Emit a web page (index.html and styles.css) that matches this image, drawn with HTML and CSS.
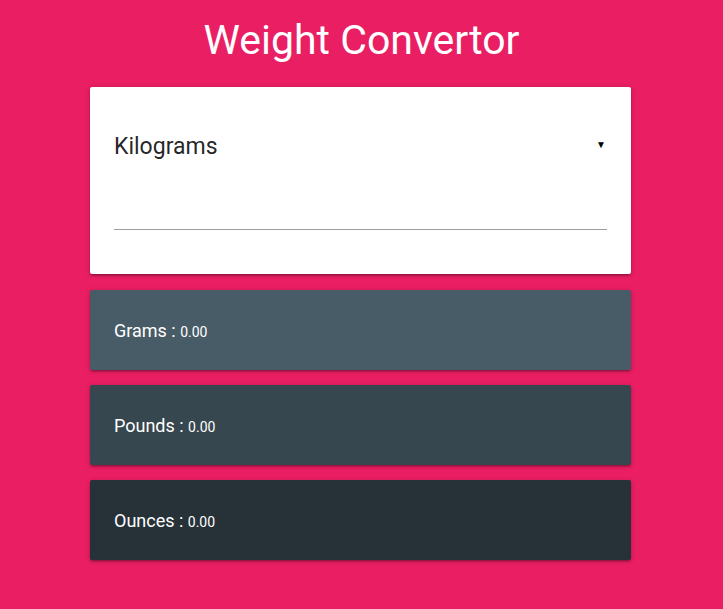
FILE: index.html
```html
<!DOCTYPE html>
<html>
<head>
<meta charset="utf-8">
<link rel="stylesheet" href="styles.css">
</head>
<body>
<h1 class="title">Weight Convertor</h1>
<main class="stack">
  <section class="card card-input">
    <div class="select">
      <span class="select-value">Kilograms</span>
      <span class="caret">&#9660;</span>
    </div>
    <div class="field"></div>
  </section>
  <section class="card result grams">
    <p class="line"><span class="label">Grams : </span><span class="value">0.00</span></p>
  </section>
  <section class="card result pounds">
    <p class="line"><span class="label">Pounds : </span><span class="value">0.00</span></p>
  </section>
  <section class="card result ounces">
    <p class="line"><span class="label">Ounces : </span><span class="value">0.00</span></p>
  </section>
</main>
</body>
</html>
```
FILE: styles.css
```css
html, body {
  margin: 0;
  padding: 0;
}
body {
  background: #e91e63;
  font-family: Roboto, "Liberation Sans", Arial, sans-serif;
  min-height: 609px;
}
.title {
  margin: 0;
  padding-top: 15px;
  height: 50px;
  line-height: 50px;
  font-size: 41px;
  font-weight: 400;
  color: #fff;
  text-align: center;
}
.stack {
  width: 541px;
  margin: 22px 0 0 90px;
  display: flex;
  flex-direction: column;
  gap: 15px;
}
.card {
  border-radius: 2px;
  box-shadow: 0 2px 2px 0 rgba(0,0,0,.14), 0 3px 1px -2px rgba(0,0,0,.12), 0 1px 5px 0 rgba(0,0,0,.2);
  padding: 0 24px;
  box-sizing: border-box;
}
.card-input {
  background: #fff;
  padding-top: 24px;
  padding-bottom: 24px;
  height: 187px;
  margin-bottom: 1px;
}
.select {
  height: 70px;
  display: flex;
  align-items: center;
  justify-content: space-between;
}
.select-value {
  font-size: 23px;
  color: rgba(0,0,0,.87);
}
.caret {
  font-size: 10px;
  color: #000;
  margin-right: 1px;
  margin-top: -3px;
}
.field {
  height: 49px;
  border-bottom: 1px solid #9e9e9e;
  box-sizing: border-box;
}
.result {
  height: 80px;
  display: flex;
  align-items: center;
  color: #fff;
  padding-top: 2px;
}
.line {
  margin: 0;
  line-height: 24px;
  white-space: pre;
}
.label {
  font-size: 18px;
}
.value {
  font-size: 14px;
}
.grams { background: #485c68; }
.pounds { background: #37474f; }
.ounces { background: #263238; }
```
